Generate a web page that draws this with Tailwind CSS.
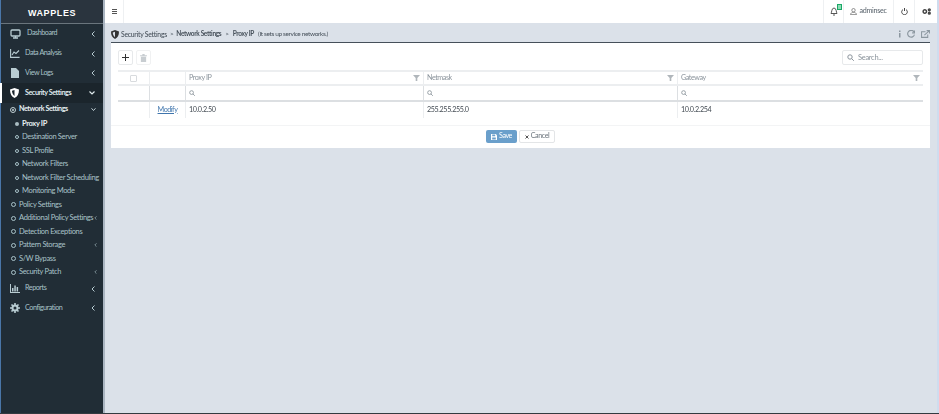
<!DOCTYPE html>
<html lang="en">
<head>
  <meta charset="UTF-8" />
  <title>WAPPLES - Proxy IP</title>
  <script src="https://cdn.jsdelivr.net/npm/@tailwindcss/browser@4"></script>
</head>
<body class="bg-[#dbe1e9] font-['Lato',sans-serif] text-[7.2px] tracking-[-0.45px] text-[#4a5560]">
  <div class="flex h-[414px] w-[939px] flex-col overflow-hidden blur-[0.3px]">
  <div class="flex min-h-0 flex-1">

    <!-- Sidebar -->
    <aside class="w-[105px] shrink-0 whitespace-nowrap border-l border-l-[#4a76a8] border-r-2 border-r-[#aab5c1] bg-[#212d36] text-[#a9c3c9]">
      <div class="flex h-[24px] items-center justify-center border-b border-[#6a757d] bg-[#2a343e] pt-[4px] font-['Liberation_Sans',sans-serif] text-[9px] font-bold tracking-[0.6px] text-white">WAPPLES</div>

      <div class="flex h-[19.7px] items-center pl-[9px] pr-[8px]">
        <svg class="mr-[6px] h-[10px] w-[11px]" viewBox="0 0 11 10" fill="none" stroke="#b8ccd2" stroke-width="1.3"><rect x="1" y="1" width="9" height="6" rx="1"/><path d="M3 9h5M5.500 7v2"/></svg>
        <span>Dashboard</span>
        <svg class="ml-auto h-[6px] w-[4px]" viewBox="0 0 4 6" fill="none" stroke="#b8ccd2"><path d="M3.500.500L1 3l2.500 2.500"/></svg>
      </div>
      <div class="flex h-[19.7px] items-center pl-[9px] pr-[8px]">
        <svg class="mr-[5px] h-[9px] w-[10px]" viewBox="0 0 10 9" fill="none" stroke="#b8ccd2" stroke-width="1.1"><path d="M.6 0v8.400h9"/><path d="M2 6l2-3 2 1.500L9 1.500"/></svg>
        <span>Data Analysis</span>
        <svg class="ml-auto h-[6px] w-[4px]" viewBox="0 0 4 6" fill="none" stroke="#b8ccd2"><path d="M3.500.500L1 3l2.500 2.500"/></svg>
      </div>
      <div class="flex h-[19.7px] items-center pl-[10px] pr-[8px]">
        <svg class="mr-[6px] h-[10px] w-[8px]" viewBox="0 0 8 10" fill="#b8ccd2"><path d="M0 0h5l3 3v7H0z"/></svg>
        <span>View Logs</span>
        <svg class="ml-auto h-[6px] w-[4px]" viewBox="0 0 4 6" fill="none" stroke="#b8ccd2"><path d="M3.500.500L1 3l2.500 2.500"/></svg>
      </div>
      <div class="-ml-px flex h-[19.7px] items-center border-l-2 border-white bg-[#1b252c] pl-[8px] pr-[7px] font-bold text-[#dfe9ec]">
        <svg class="mr-[6px] h-[10px] w-[9px]" viewBox="0 0 9 10"><path fill="#fff" d="M4.500 0L9 1.500C9 6 7.500 8.500 4.500 10 1.500 8.500 0 6 0 1.500z"/><path fill="#1b252c" d="M4.500 2L2 2.800C2 5 3 7 4.500 8z"/></svg>
        <span>Security Settings</span>
        <svg class="ml-auto mr-px h-[4px] w-[6px]" viewBox="0 0 6 4" fill="none" stroke="#dfe9ec" stroke-width="1.2"><path d="M.5.500L3 3 5.500.500"/></svg>
      </div>

      <div class="flex h-[14px] items-center pl-[9px] pr-[7px] font-bold text-[#e8f0f2]">
        <span class="mr-[3px] flex h-[6px] w-[6px] shrink-0 items-center justify-center rounded-full border border-[#c3d2d6]"><span class="h-[2px] w-[2px] rounded-full bg-[#c3d2d6]"></span></span>
        <span>Network Settings</span>
        <svg class="ml-auto h-[3px] w-[5px]" viewBox="0 0 5 3" fill="none" stroke="#c3d2d6"><path d="M.5.300L2.500 2.500 4.500.300"/></svg>
      </div>
      <div class="flex h-[13.500px] items-center pl-[14px] text-[7.5px] font-bold tracking-[-0.35px] text-[#e8f0f2]"><span class="mr-[3px] h-[4px] w-[4px] shrink-0 rounded-full bg-[#a9bcc2]"></span>Proxy IP</div>
      <div class="flex h-[13.500px] items-center pl-[14px] text-[7.5px] tracking-[-0.35px]"><span class="mr-[3px] h-[4px] w-[4px] shrink-0 rounded-full border-[0.7px] border-[#a9c3c9]"></span>Destination Server</div>
      <div class="flex h-[13.500px] items-center pl-[14px] text-[7.5px] tracking-[-0.35px]"><span class="mr-[3px] h-[4px] w-[4px] shrink-0 rounded-full border-[0.7px] border-[#a9c3c9]"></span>SSL Profile</div>
      <div class="flex h-[13.500px] items-center pl-[14px] text-[7.5px] tracking-[-0.35px]"><span class="mr-[3px] h-[4px] w-[4px] shrink-0 rounded-full border-[0.7px] border-[#a9c3c9]"></span>Network Filters</div>
      <div class="flex h-[13.500px] items-center pl-[14px] text-[7.5px] tracking-[-0.35px]"><span class="mr-[3px] h-[4px] w-[4px] shrink-0 rounded-full border-[0.7px] border-[#a9c3c9]"></span>Network Filter Scheduling</div>
      <div class="flex h-[13.500px] items-center pl-[14px] text-[7.5px] tracking-[-0.35px]"><span class="mr-[3px] h-[4px] w-[4px] shrink-0 rounded-full border-[0.7px] border-[#a9c3c9]"></span>Monitoring Mode</div>

      <div class="flex h-[13.500px] items-center pl-[10px] pr-[6px] text-[7.5px] tracking-[-0.35px]"><span class="mr-[3px] h-[5px] w-[5px] shrink-0 rounded-full border border-[#a9c3c9]"></span>Policy Settings</div>
      <div class="flex h-[13.500px] items-center pl-[10px] pr-[6px] text-[7.5px] tracking-[-0.35px]"><span class="mr-[3px] h-[5px] w-[5px] shrink-0 rounded-full border border-[#a9c3c9]"></span>Additional Policy Settings<svg class="ml-auto h-[4px] w-[3px] shrink-0" viewBox="0 0 3 4" fill="none" stroke="#8fa5ab" stroke-width=".8"><path d="M2.500.300L.8 2l1.700 1.700"/></svg></div>
      <div class="flex h-[13.500px] items-center pl-[10px] pr-[6px] text-[7.5px] tracking-[-0.35px]"><span class="mr-[3px] h-[5px] w-[5px] shrink-0 rounded-full border border-[#a9c3c9]"></span>Detection Exceptions</div>
      <div class="flex h-[13.500px] items-center pl-[10px] pr-[6px] text-[7.5px] tracking-[-0.35px]"><span class="mr-[3px] h-[5px] w-[5px] shrink-0 rounded-full border border-[#a9c3c9]"></span>Pattern Storage<svg class="ml-auto h-[4px] w-[3px] shrink-0" viewBox="0 0 3 4" fill="none" stroke="#8fa5ab" stroke-width=".8"><path d="M2.500.300L.8 2l1.700 1.700"/></svg></div>
      <div class="flex h-[13.500px] items-center pl-[10px] pr-[6px] text-[7.5px] tracking-[-0.35px]"><span class="mr-[3px] h-[5px] w-[5px] shrink-0 rounded-full border border-[#a9c3c9]"></span>S/W Bypass</div>
      <div class="flex h-[13.500px] items-center pl-[10px] pr-[6px] text-[7.5px] tracking-[-0.35px]"><span class="mr-[3px] h-[5px] w-[5px] shrink-0 rounded-full border border-[#a9c3c9]"></span>Security Patch<svg class="ml-auto h-[4px] w-[3px] shrink-0" viewBox="0 0 3 4" fill="none" stroke="#8fa5ab" stroke-width=".8"><path d="M2.500.300L.8 2l1.700 1.700"/></svg></div>

      <div class="flex h-[19.7px] items-center pl-[9px] pr-[8px]">
        <svg class="mr-[5px] h-[9px] w-[10px]" viewBox="0 0 10 9" fill="#b8ccd2"><path d="M0 0h1v8h9v1H0z"/><path d="M2 4h1.500v3.500H2zM4.300 1.500h1.500v6H4.300zM6.600 3h1.500v4.500H6.600z"/></svg>
        <span>Reports</span>
        <svg class="ml-auto h-[6px] w-[4px]" viewBox="0 0 4 6" fill="none" stroke="#b8ccd2"><path d="M3.500.500L1 3l2.500 2.500"/></svg>
      </div>
      <div class="flex h-[19.7px] items-center pl-[9px] pr-[8px]">
        <svg class="mr-[5px] h-[10px] w-[10px]" viewBox="0 0 10 10" fill="none" stroke="#b8ccd2" stroke-width="2"><circle cx="5" cy="5" r="2.500"/><path stroke-width="1.600" d="M5 0v2M5 8v2M0 5h2M8 5h2M1.500 1.500l1.400 1.400M7.100 7.100l1.400 1.400M8.500 1.500L7.100 2.900M2.900 7.100L1.500 8.500"/></svg>
        <span>Configuration</span>
        <svg class="ml-auto h-[6px] w-[4px]" viewBox="0 0 4 6" fill="none" stroke="#b8ccd2"><path d="M3.500.500L1 3l2.500 2.500"/></svg>
      </div>
    </aside>

    <main class="flex min-w-0 flex-1 flex-col">
      <!-- Top bar -->
      <header class="flex h-[23px] items-center bg-white">
        <div class="flex h-full w-[19px] items-center justify-center border-r border-[#eef0f2]">
          <svg class="h-[5px] w-[5px]" viewBox="0 0 5 5" fill="#555"><path d="M0 0h5v1H0zM0 2h5v1H0zM0 4h5v1H0z"/></svg>
        </div>
        <div class="ml-auto flex h-full items-center text-[#59636c]">
          <div class="flex h-full w-[21px] items-center justify-center border-x border-[#eef0f2] pl-[1px]">
            <div class="relative">
              <svg class="h-[9px] w-[8px]" viewBox="0 0 8 9" fill="none" stroke="#444" stroke-width=".9"><path d="M1 6.500C1.800 5.500 1.500 1 4 1s2.200 4.500 3 5.500zM3 8h2"/></svg>
              <span class="absolute -right-[4px] -top-[3px] h-[6px] w-[5px] border border-[#1aa867] bg-[#8fdcb5]"></span>
            </div>
          </div>
          <div class="flex h-full w-[50px] items-center justify-center gap-[2px] border-r border-[#eef0f2]">
            <svg class="h-[7px] w-[7px]" viewBox="0 0 7 7" fill="none" stroke="#666" stroke-width=".7"><circle cx="3.500" cy="2.200" r="1.700"/><path d="M.5 6.600c0-3 6-3 6 0z"/></svg>
            <span class="tracking-[-0.3px]">adminsec</span>
          </div>
          <div class="flex h-full w-[21px] items-center justify-center border-r border-[#eef0f2]">
            <svg class="h-[7px] w-[7px]" viewBox="0 0 7 7" fill="none" stroke="#444"><path d="M2 1.500a2.800 2.800 0 1 0 3 0M3.500 0v3"/></svg>
          </div>
          <div class="flex h-full w-[22px] items-center justify-center">
            <svg class="h-[7px] w-[9px]" viewBox="0 0 8 6" fill="none" stroke="#444" stroke-width="1.300"><circle cx="2.500" cy="3" r="1.500"/><circle cx="6.500" cy="1.500" r=".8"/><circle cx="6.500" cy="4.500" r=".8"/></svg>
          </div>
        </div>
      </header>

      <!-- Breadcrumb -->
      <div class="flex h-[19px] items-center pl-[6px] pr-[7px] pt-[3px] text-[6.5px] tracking-[-0.35px] text-[#46505a]">
        <svg class="mr-[2px] h-[9px] w-[8px]" viewBox="0 0 9 10"><path fill="#333" d="M4.500 0L9 1.500C9 6 7.500 8.500 4.500 10 1.500 8.500 0 6 0 1.500z"/><path fill="#dbe1e9" d="M4.500 2L2 2.800C2 5 3 7 4.500 8z"/></svg>
        <span class="text-[6.8px] font-medium tracking-[-0.25px]">Security Settings</span>
        <span class="mx-[3px]">&gt;</span>
        <span class="font-bold">Network Settings</span>
        <span class="mx-[4px]">&gt;</span>
        <span class="font-bold">Proxy IP</span>
        <span class="ml-[4px] tracking-[-0.37px]">(It sets up service networks.)</span>
        <div class="ml-auto flex items-center gap-[6px]">
          <svg class="h-[8px] w-[3px]" viewBox="0 0 3 7" fill="#8b969f"><path d="M1 0h1.500v1.500H1zM1 2.500h1.500V7H1z"/></svg>
          <svg class="h-[8px] w-[8px]" viewBox="0 0 7 7" fill="none" stroke="#8b969f"><path d="M6 1.500A3 3 0 1 0 6.500 4M6.500 .5v2h-2"/></svg>
          <svg class="h-[8px] w-[9px]" viewBox="0 0 8 7" fill="none" stroke="#8b969f" stroke-width=".9"><path d="M6 4v2.500H.5v-5h3.500M3 4.500L7.500.5M5 .5h2.500V3"/></svg>
        </div>
      </div>

      <!-- Card -->
      <section class="ml-[6px] mr-[7px] h-[106px] border-t border-[#46505a] bg-white px-[7px] pt-[7px]">
        <div class="flex h-[15px] items-center">
          <button class="flex h-[15px] w-[15px] items-center justify-center rounded-[2px] border border-[#e7e9eb] text-[#333]">
            <svg class="h-[7px] w-[7px]" viewBox="0 0 7 7" fill="#333"><path d="M3 0h1v3h3v1H4v3H3V4H0V3h3z"/></svg>
          </button>
          <button class="ml-[3px] flex h-[15px] w-[15px] items-center justify-center rounded-[2px] border border-[#f0f1f2]">
            <svg class="h-[8px] w-[7px]" viewBox="0 0 6 7" fill="#c8cdd1"><path d="M0 1h6v1H0zM2 0h2v1H2zM.7 2.300h4.600V7H.7z"/></svg>
          </button>
          <div class="ml-auto flex h-[15px] w-[81px] items-center gap-[4px] rounded-[2px] border border-[#e7e9eb] px-[4px] text-[7.5px] tracking-[-0.3px] text-[#8b949c]">
            <svg class="h-[7px] w-[7px]" viewBox="0 0 7 7" fill="none" stroke="#8b949c"><circle cx="3" cy="3" r="2.200"/><path d="M4.600 4.600L6.800 6.800"/></svg>
            Search...
          </div>
        </div>

        <div class="mt-[5px] grid grid-cols-[32px_36px_238px_254px_1fr]">
          <div class="flex h-[16px] items-center justify-center border-y-2 border-r border-[#eceef0]"><span class="h-[7px] w-[7px] rounded-[1px] border border-[#d8dbde]"></span></div>
          <div class="h-[16px] border-y-2 border-r border-[#eceef0]"></div>
          <div class="flex h-[16px] items-center justify-between border-y-2 border-r border-[#eceef0] pl-[3px] pr-[3px] text-[#8b949c]">Proxy IP<svg class="h-[6px] w-[7px]" viewBox="0 0 6 5" fill="#b0b6bb"><path d="M0 0h6L3.700 2.500V5H2.300V2.500z"/></svg></div>
          <div class="flex h-[16px] items-center justify-between border-y-2 border-r border-[#eceef0] pl-[3px] pr-[3px] text-[#8b949c]">Netmask<svg class="h-[6px] w-[7px]" viewBox="0 0 6 5" fill="#b0b6bb"><path d="M0 0h6L3.700 2.500V5H2.300V2.500z"/></svg></div>
          <div class="flex h-[16px] items-center justify-between border-y-2 border-[#eceef0] pl-[3px] pr-[3px] text-[#8b949c]">Gateway<svg class="h-[6px] w-[7px]" viewBox="0 0 6 5" fill="#b0b6bb"><path d="M0 0h6L3.700 2.500V5H2.300V2.500z"/></svg></div>

          <div class="h-[16px] border-b-2 border-r border-[#dcdfe2]"></div>
          <div class="h-[16px] border-b-2 border-r border-[#dcdfe2]"></div>
          <div class="flex h-[16px] items-center border-b-2 border-r border-[#dcdfe2] pl-[3px]"><svg class="h-[6px] w-[6px]" viewBox="0 0 7 7" fill="none" stroke="#8b949c"><circle cx="3" cy="3" r="2.200"/><path d="M4.600 4.600L6.800 6.800"/></svg></div>
          <div class="flex h-[16px] items-center border-b-2 border-r border-[#dcdfe2] pl-[3px]"><svg class="h-[6px] w-[6px]" viewBox="0 0 7 7" fill="none" stroke="#8b949c"><circle cx="3" cy="3" r="2.200"/><path d="M4.600 4.600L6.800 6.800"/></svg></div>
          <div class="flex h-[16px] items-center border-b-2 border-[#dcdfe2] pl-[3px]"><svg class="h-[6px] w-[6px]" viewBox="0 0 7 7" fill="none" stroke="#8b949c"><circle cx="3" cy="3" r="2.200"/><path d="M4.600 4.600L6.800 6.800"/></svg></div>

          <div class="h-[16px] border-r border-[#eceef0]"></div>
          <div class="flex h-[16px] items-center justify-center border-r border-[#eceef0] text-[#3f75ad] underline">Modify</div>
          <div class="flex h-[16px] items-center border-r border-[#eceef0] pl-[3px] tracking-[-0.4px] text-[#444c54]">10.0.2.50</div>
          <div class="flex h-[16px] items-center border-r border-[#eceef0] pl-[3px] tracking-[-0.4px] text-[#444c54]">255.255.255.0</div>
          <div class="flex h-[16px] items-center pl-[3px] tracking-[-0.4px] text-[#444c54]">10.0.2.254</div>
        </div>

        <div class="-mx-[7px] mt-[7px] flex items-center justify-center gap-[2px] border-t border-[#f3f4f5] pt-[4px]">
          <button class="flex h-[13px] w-[31px] items-center justify-center gap-[2px] rounded-[2px] bg-[#6a9fcb] text-white">
            <svg class="h-[6px] w-[6px]" viewBox="0 0 5 5"><path fill="#fff" d="M0 0h4l1 1v4H0z"/><path fill="#6a9fcb" d="M1 .5h2.500v1.300H1zM1 3h3v1.500H1z"/></svg>Save
          </button>
          <button class="flex h-[13px] w-[36px] items-center justify-center gap-[2px] rounded-[2px] border border-[#e3e5e7] text-[#6b747c]">
            <svg class="h-[4px] w-[4px]" viewBox="0 0 4 4" stroke="#555"><path d="M.5.500l3 3M3.500.500l-3 3"/></svg>Cancel
          </button>
        </div>
      </section>
    </main>

    <div class="w-[2px] shrink-0 bg-[#cfdcee]"></div>
  </div>
  <div class="h-px shrink-0 bg-[#333a40]"></div>
  </div>
</body>
</html>
